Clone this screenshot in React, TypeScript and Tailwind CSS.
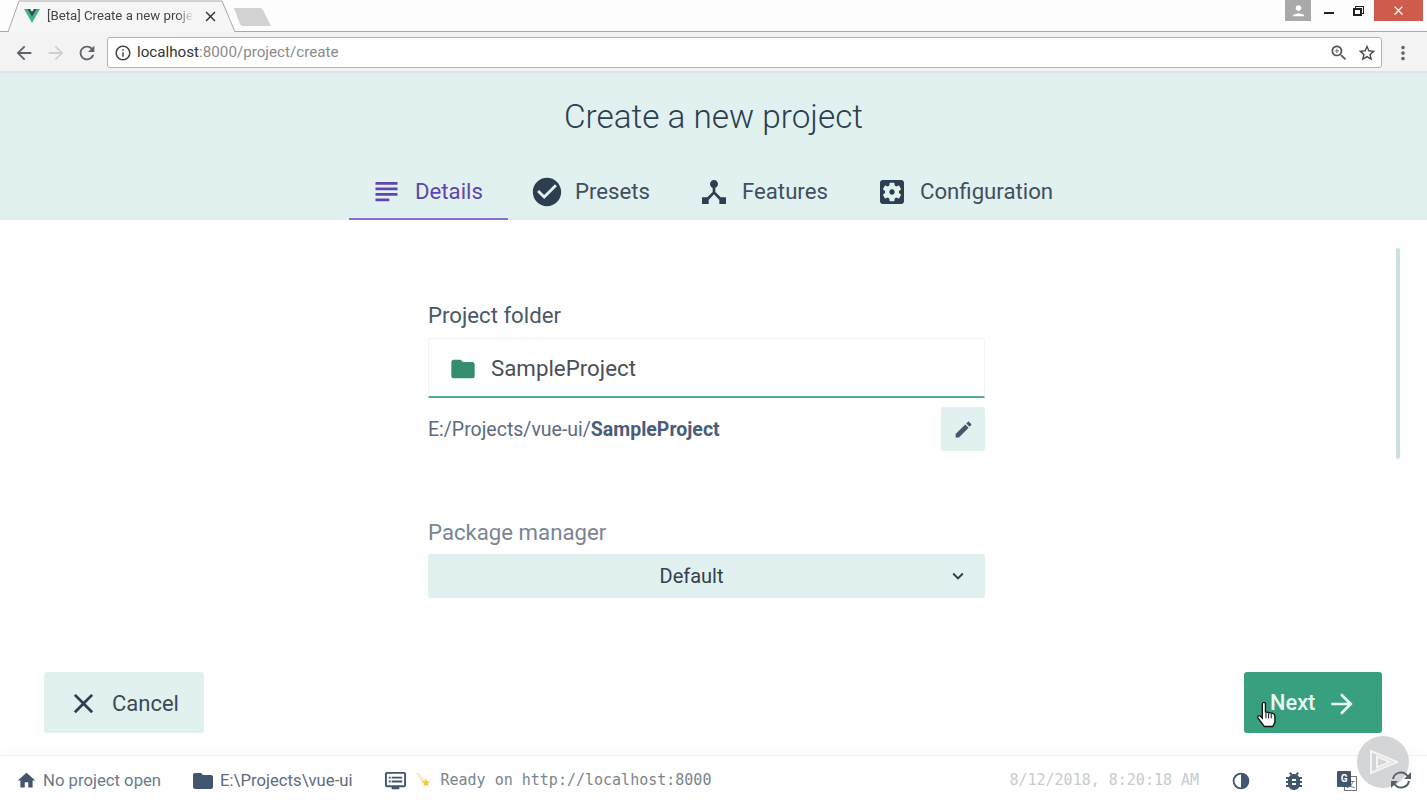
import type { ReactNode } from "react";

const P = {
  subject: "M14 17H4v2h10v-2zm6-8H4v2h16V9zM4 15h16v-2H4v2zM4 5v2h16V5H4z",
  check: "M12 2C6.48 2 2 6.48 2 12s4.48 10 10 10 10-4.48 10-10S17.52 2 12 2zm-2 15l-5-5 1.41-1.41L10 14.17l7.59-7.59L19 8l-9 9z",
  hub: "M17 16l-4-4V8.82C14.16 8.4 15 7.3 15 6c0-1.66-1.34-3-3-3S9 4.34 9 6c0 1.3.84 2.4 2 2.82V12l-4 4H3v5h5v-3.05l4-4.2 4 4.2V21h5v-5h-4z",
  gear: "M12 10c-1.1 0-2 .9-2 2s.9 2 2 2 2-.9 2-2-.9-2-2-2zm7-7H5c-1.11 0-2 .9-2 2v14c0 1.1.89 2 2 2h14c1.11 0 2-.9 2-2V5c0-1.1-.89-2-2-2zm-1.75 9c0 .23-.02.46-.05.68l1.48 1.16c.13.11.17.3.08.45l-1.4 2.42c-.09.15-.27.21-.43.15l-1.74-.7c-.36.28-.76.51-1.18.69l-.26 1.85c-.03.17-.18.3-.35.3h-2.8c-.17 0-.32-.13-.35-.29l-.26-1.85c-.43-.18-.82-.41-1.18-.69l-1.74.7c-.16.06-.34 0-.43-.15l-1.4-2.42c-.09-.15-.05-.34.08-.45l1.48-1.16c-.03-.23-.05-.46-.05-.69 0-.23.02-.46.05-.68l-1.48-1.16c-.13-.11-.17-.3-.08-.45l1.4-2.42c.09-.15.27-.21.43-.15l1.74.7c.36-.28.76-.51 1.18-.69l.26-1.85c.03-.17.18-.3.35-.3h2.8c.17 0 .32.13.35.29l.26 1.85c.43.18.82.41 1.18.69l1.74-.7c.16-.06.34 0 .43.15l1.4 2.42c.09.15.05.34-.08.45l-1.48 1.16c.03.23.05.46.05.69z",
  folder: "M10 4H4c-1.1 0-1.99.9-1.99 2L2 18c0 1.1.9 2 2 2h16c1.1 0 2-.9 2-2V8c0-1.1-.9-2-2-2h-8l-2-2z",
  edit: "M3 17.25V21h3.75L17.81 9.94l-3.75-3.75L3 17.25zM20.71 7.04c.39-.39.39-1.02 0-1.41l-2.34-2.34c-.39-.39-1.02-.39-1.41 0l-1.83 1.83 3.75 3.75 1.83-1.83z",
  more: "M16.59 8.59L12 13.17 7.41 8.59 6 10l6 6 6-6z",
  close: "M19 6.41L17.59 5 12 10.59 6.41 5 5 6.41 10.59 12 5 17.59 6.41 19 12 13.41 17.59 19 19 17.59 13.41 12z",
  forward: "M12 4l-1.41 1.41L16.17 11H4v2h12.17l-5.58 5.59L12 20l8-8z",
  back: "M20 11H7.83l5.59-5.59L12 4l-8 8 8 8 1.41-1.41L7.83 13H20v-2z",
  refresh: "M17.65 6.35C16.2 4.9 14.21 4 12 4c-4.42 0-7.99 3.58-7.99 8s3.57 8 7.99 8c3.73 0 6.84-2.55 7.73-6h-2.08c-.82 2.33-3.04 4-5.65 4-3.31 0-6-2.69-6-6s2.69-6 6-6c1.66 0 3.14.69 4.22 1.78L13 11h7V4l-2.35 2.35z",
  info: "M11 7h2v2h-2zm0 4h2v6h-2zm1-9C6.48 2 2 6.48 2 12s4.48 10 10 10 10-4.48 10-10S17.52 2 12 2zm0 18c-4.41 0-8-3.59-8-8s3.59-8 8-8 8 3.59 8 8-3.59 8-8 8z",
  zoom: "M15.5 14h-.79l-.28-.27C15.41 12.59 16 11.11 16 9.5 16 5.91 13.09 3 9.5 3S3 5.91 3 9.5 5.91 16 9.5 16c1.61 0 3.09-.59 4.23-1.57l.27.28v.79l5 4.99L20.49 19l-4.99-5zm-6 0C7.01 14 5 11.99 5 9.5S7.01 5 9.5 5 14 7.01 14 9.5 11.99 14 9.5 14zM12 10h-2v2H9v-2H7V9h2V7h1v2h2v1z",
  star: "M22 9.24l-7.19-.62L12 2 9.19 8.63 2 9.24l5.46 4.73L5.82 21 12 17.27 18.18 21l-1.63-7.03L22 9.24zM12 15.4l-3.76 2.27 1-4.28-3.32-2.88 4.38-.38L12 6.1l1.71 4.04 4.38.38-3.32 2.88 1 4.28L12 15.4z",
  dots: "M12 8c1.1 0 2-.9 2-2s-.9-2-2-2-2 .9-2 2 .9 2 2 2zm0 2c-1.1 0-2 .9-2 2s.9 2 2 2 2-.9 2-2-.9-2-2-2zm0 6c-1.1 0-2 .9-2 2s.9 2 2 2 2-.9 2-2-.9-2-2-2z",
  home: "M10 20v-6h4v6h5v-8h3L12 3 2 12h3v8z",
  dvr: "M21 3H3c-1.1 0-2 .9-2 2v12c0 1.1.9 2 2 2h5v2h8v-2h5c1.1 0 1.99-.9 1.99-2L23 5c0-1.1-.9-2-2-2zm0 14H3V5h18v12zm-2-9H8v2h11V8zm0 4H8v2h11v-2zM7 8H5v2h2V8zm0 4H5v2h2v-2z",
  contrast: "M12 2a10 10 0 1 0 0 20 10 10 0 0 0 0-20zm0 2.2v15.6a7.8 7.8 0 0 1 0-15.6z",
  bug: "M20 8h-2.81c-.45-.78-1.07-1.45-1.82-1.96L17 4.41 15.59 3l-2.17 2.17C12.96 5.06 12.49 5 12 5c-.49 0-.96.06-1.41.17L8.41 3 7 4.41l1.62 1.63C7.88 6.55 7.26 7.22 6.81 8H4v2h2.09c-.05.33-.09.66-.09 1v1H4v2h2v1c0 .34.04.67.09 1H4v2h2.81c1.04 1.79 2.97 3 5.19 3s4.15-1.21 5.19-3H20v-2h-2.09c.05-.33.09-.66.09-1v-1h2v-2h-2v-1c0-.34-.04-.67-.09-1H20V8zm-6 8h-4v-2h4v2zm0-4h-4v-2h4v2z",
};

function Icon({ d, className }: { d: string; className: string }) {
  return (
    <svg viewBox="0 0 24 24" fill="currentColor" className={`shrink-0 ${className}`}>
      <path d={d} />
    </svg>
  );
}

function Tab({ icon, children, active, className }: { icon: ReactNode; children: ReactNode; active?: boolean; className: string }) {
  return (
    <div className={`flex h-[55px] items-center border-b-2 ${active ? "border-[#8b6fc9] text-[#5f45b0]" : "border-transparent text-[#2c3e50]"} ${className}`}>
      {icon}
      <span className={active ? "text-[#5f45b0]" : "text-[#3f4f5f]"}>{children}</span>
    </div>
  );
}

export default function App() {
  return (
    <div className="relative flex h-[802px] w-[1427px] flex-col overflow-hidden bg-white font-['Roboto',sans-serif] text-[#2c3e50]">
      {/* browser tab strip */}
      <div className="relative flex h-[32px] shrink-0 items-start border-b border-[#a9a9a9] bg-[#fdfdfd]">
        <div className="relative ml-[8px] h-[32px] w-[228px] shrink-0">
          <svg viewBox="0 0 228 32" className="absolute inset-0 h-full w-full">
            <path d="M0 32 L11 1 H214 L227 32" fill="#f6f6f6" stroke="#a9a9a9" strokeWidth="1" />
            <path d="M1 32 H226" stroke="#f6f6f6" strokeWidth="2" />
          </svg>
          <div className="relative flex h-[32px] items-center pl-[16px]">
            <svg viewBox="0 0 16 14" className="h-[14px] w-[16px] shrink-0">
              <path d="M0 0 H5 L8 5 L11 0 H16 L8 14 Z" fill="#41b883" />
              <path d="M3.5 0 H6.2 L8 3 L9.8 0 H12.5 L8 7.8 Z" fill="#35495e" />
            </svg>
            <span className="ml-[7px] w-[147px] overflow-hidden whitespace-nowrap text-[13.2px] text-[#444] [mask-image:linear-gradient(to_right,black_88%,transparent)]">[Beta] Create a new proje</span>
            <Icon d={P.close} className="ml-[8px] h-[17px] w-[17px] text-[#333]" />
          </div>
        </div>
        <svg viewBox="0 0 40 20" className="ml-[-3px] mt-[8px] h-[20px] w-[40px] shrink-0">
          <path d="M1 0 H27 Q29 0 30 2 L38 18 H10 Q8 18 7 16 Z" fill="#d2d2d2" />
        </svg>
        <div className="ml-auto flex h-[21px] items-start">
          <div className="flex h-[21px] w-[26px] items-center justify-center bg-[#a9a9a9]">
            <svg viewBox="0 0 16 16" className="h-[13px] w-[13px]" fill="#fff">
              <circle cx="8" cy="5" r="3.4" />
              <path d="M1 15 C1 10.5 15 10.5 15 15 Z" />
            </svg>
          </div>
          <div className="ml-[13px] mt-[12px] h-[2px] w-[10px] bg-[#222]" />
          <div className="relative ml-[19px] mt-[6px] h-[10px] w-[11px]">
            <div className="absolute right-0 top-0 h-[8px] w-[9px] border border-[#222]" />
            <div className="absolute bottom-0 left-0 h-[8px] w-[9px] border-2 border-[#222] bg-[#fdfdfd]" />
          </div>
          <div className="ml-[10px] mr-[4px] flex h-[21px] w-[49px] items-center justify-center bg-[#cf5b4c] text-white">
            <Icon d={P.close} className="h-[15px] w-[15px]" />
          </div>
        </div>
      </div>

      {/* browser toolbar */}
      <div className="flex h-[41px] shrink-0 items-center border-b-2 border-[#dfe3e2] bg-[#f3f3f3] pt-[2px]">
        <Icon d={P.back} className="ml-[13px] h-[22px] w-[22px] text-[#5f6368]" />
        <Icon d={P.forward} className="ml-[10px] h-[22px] w-[22px] text-[#d0d0d0]" />
        <Icon d={P.refresh} className="ml-[9px] h-[22px] w-[22px] text-[#5f6368]" />
        <div className="ml-[9px] flex h-[31px] w-[1275px] items-center rounded-[3px] border border-[#b4b4b4] bg-white pl-[6px] pr-[4px] text-[15.2px]">
          <Icon d={P.info} className="h-[18px] w-[18px] text-[#444]" />
          <span className="ml-[5px] text-[#333]">localhost</span>
          <span className="text-[#8a8a8a]">:8000/project/create</span>
          <Icon d={P.zoom} className="ml-auto h-[20px] w-[20px] text-[#555]" />
          <Icon d={P.star} className="ml-[8px] h-[20px] w-[20px] text-[#444]" />
        </div>
        <Icon d={P.dots} className="ml-[10px] h-[22px] w-[22px] text-[#666]" />
      </div>

      {/* page header */}
      <div className="flex h-[147px] shrink-0 flex-col items-center bg-[#e1f1ef]">
        <h1 className="mt-[22px] h-[48px] text-[33.3px] leading-[44px] font-light text-[#2c3e50]">Create a new project</h1>
        <div className="mt-[22px] flex w-full pl-[349px] text-[22.2px]">
          <Tab active className="w-[159px] pl-[21px]" icon={<Icon d={P.subject} className="mr-[12px] h-[33px] w-[33px]" />}>Details</Tab>
          <Tab className="w-[169px] pl-[22px]" icon={<Icon d={P.check} className="mr-[11px] h-[34px] w-[34px]" />}>Presets</Tab>
          <Tab className="w-[178px] pl-[21px]" icon={<Icon d={P.hub} className="mr-[12px] h-[32px] w-[32px]" />}>Features</Tab>
          <Tab className="pl-[21px]" icon={<Icon d={P.gear} className="mr-[12px] h-[32px] w-[32px]" />}>Configuration</Tab>
        </div>
      </div>

      {/* form */}
      <div className="relative flex-1">
        <div className="ml-[428px] flex w-[557px] flex-col pt-[81px]">
          <div className="h-[37px] text-[22.2px] leading-[28px] text-[#49586a]">Project folder</div>
          <div className="flex h-[60px] items-center rounded-t-[3px] border-x border-t border-x-[#f1f5f5] border-t-[#f1f5f5] border-b-2 border-b-[#57ad90] pl-[20px] pt-[3px]">
            <Icon d={P.folder} className="h-[28px] w-[28px] text-[#358c6e]" />
            <span className="ml-[14px] text-[22.3px] text-[#4a4f57]">SampleProject</span>
          </div>
          <div className="mt-[9px] flex h-[44px] items-center">
            <span className="pt-[1px] text-[19.5px] text-[#5b6b80]">
              E:/Projects/vue-ui/<b className="font-bold text-[#4a5d78]">SampleProject</b>
            </span>
            <div className="ml-auto flex h-[44px] w-[44px] items-center justify-center rounded-[3px] bg-[#e1f1ef]">
              <Icon d={P.edit} className="h-[21px] w-[21px] text-[#42566f]" />
            </div>
          </div>
          <div className="mt-[66px] h-[37px] text-[22.2px] leading-[30px] text-[#7a8592]">Package manager</div>
          <div className="relative flex h-[44px] items-center justify-center rounded-[3px] bg-[#e1f1ef] pb-[1px] pr-[30px] text-[20px] text-[#35404d]">
            Default
            <Icon d={P.more} className="absolute right-[16px] h-[22px] w-[22px] text-[#2c3e50]" />
          </div>
        </div>
        <div className="absolute right-[27px] top-[28px] h-[211px] w-[4px] rounded-full bg-[#cde0e4]" />
      </div>

      {/* actions */}
      <div className="flex h-[61px] shrink-0 items-center justify-between pl-[44px] pr-[45px]">
        <div className="flex h-[61px] w-[160px] items-center rounded-[3px] bg-[#e1f1ef] pl-[23px] pt-[2px] text-[22px] text-[#3d4a57]">
          <Icon d={P.close} className="mr-[12px] h-[33px] w-[33px] text-[#2c3e50]" />
          Cancel
        </div>
        <div className="relative flex h-[61px] w-[138px] items-center rounded-[3px] bg-[#39a07f] pl-[26px] pt-[2px] text-[21.8px] font-medium text-[#e7f7f2]">
          Next
          <Icon d={P.forward} className="ml-[11px] h-[32px] w-[32px] text-[#e7f7f2]" />
          <svg viewBox="0 0 20 26" className="absolute left-[12px] top-[29px] h-[28px] w-[21px]">
            <path d="M6 2 a1.6 1.6 0 0 1 3 0 V10 l7 1.5 c1.5 .4 2 1.4 2 2.6 V20 l-2 4 H8 L2 16 c-1-1.5 .5-3 2-2 l2 2 Z" fill="#fff" stroke="#111" strokeWidth="1.3" />
            <path d="M9.5 11 V16 M12 11.5 V16 M14.5 12 V16" stroke="#111" strokeWidth="1" />
          </svg>
        </div>
      </div>

      {/* status bar */}
      <div className="mt-[22px] flex h-[47px] shrink-0 items-center border-t border-[#f0f2f2] pl-[16px] pt-[3px] text-[16.7px] text-[#6a7a8c] shadow-[0_-6px_10px_rgba(0,0,0,0.015)]">
        <Icon d={P.home} className="h-[21px] w-[21px] text-[#42566f]" />
        <span className="ml-[6px]">No project open</span>
        <Icon d={P.folder} className="ml-[30px] h-[24px] w-[24px] text-[#42566f]" />
        <span className="ml-[5px] text-[#5e6c7c]">E:\Projects\vue-ui</span>
        <Icon d={P.dvr} className="ml-[31px] h-[23px] w-[23px] text-[#42566f]" />
        <svg viewBox="0 0 16 16" className="ml-[9px] h-[16px] w-[16px] shrink-0">
          <path d="M0 0 L3 0 L10 8 L7 11 Z" fill="#fbeec2" />
          <path d="M10 5.5 L11.3 8.3 L14.3 8.6 L12 10.6 L12.8 13.7 L10 12 L7.2 13.7 L8 10.6 L5.7 8.6 L8.7 8.3 Z" fill="#f7c948" />
        </svg>
        <span className="ml-[9px] font-['DejaVu_Sans_Mono',monospace] text-[15px] text-[#7a858e]">Ready on http://localhost:8000</span>
        <span className="ml-[298px] font-['DejaVu_Sans_Mono',monospace] text-[15px] text-[#c8cbce]">8/12/2018, 8:20:18 AM</span>
        <Icon d={P.contrast} className="ml-[32px] h-[20px] w-[20px] text-[#42566f]" />
        <Icon d={P.bug} className="ml-[31px] h-[24px] w-[24px] text-[#42566f]" />
        <div className="relative ml-[31px] h-[20px] w-[20px] shrink-0">
          <div className="absolute bottom-0 right-0 flex h-[15px] w-[13px] items-center justify-center border border-[#777] bg-white font-['Noto_Sans_CJK_SC',sans-serif] text-[9px] leading-none text-[#666]">文</div>
          <div className="absolute left-0 top-0 flex h-[16px] w-[14px] items-center justify-center rounded-[1px] bg-[#42566f] text-[10px] font-bold text-white">G</div>
        </div>
        <svg viewBox="0 0 24 24" className="relative z-10 mb-[2px] ml-[32px] h-[24px] w-[24px] shrink-0 text-[#55606a]" fill="currentColor">
          <path d="M4 11 A8 8 0 0 1 18.5 8 M20 13 A8 8 0 0 1 5.5 16" fill="none" stroke="currentColor" strokeWidth="2" />
          <path d="M22 4 V11 H15 Z M2 20 V13 H9 Z" />
        </svg>
      </div>

      {/* player watermark */}
      <div className="absolute left-[1357px] top-[736px] flex h-[52px] w-[52px] items-center justify-center rounded-full bg-[#cfd0d1]/90">
        <svg viewBox="0 0 28 24" className="ml-[2px] h-[24px] w-[28px]" fill="none" stroke="#f4f4f4" strokeWidth="2">
          <path d="M1 1 L27 12 L1 23 Z" />
          <path d="M7 6.5 L20 12 L7 17.5 Z" />
        </svg>
      </div>
    </div>
  );
}
